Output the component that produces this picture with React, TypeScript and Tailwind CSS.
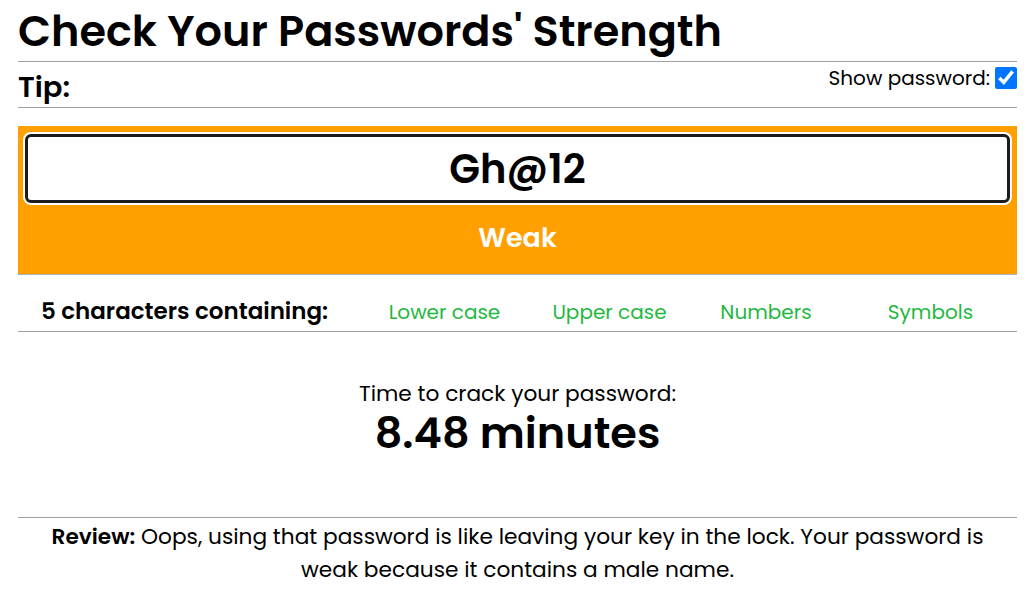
import { useEffect, useRef } from "react";

const checks = [
  { label: "Lower case" },
  { label: "Upper case" },
  { label: "Numbers" },
  { label: "Symbols" },
];

export default function App() {
  const inputRef = useRef<HTMLInputElement>(null);

  useEffect(() => {
    const el = inputRef.current;
    if (el) {
      el.focus();
      el.setSelectionRange(5, 5);
    }
  }, []);

  return (
    <div className="min-h-[601px] bg-white px-[18px] text-black font-['Poppins','Open_Sans',sans-serif]">
      <h1 className="h-[62px] pt-[5px] text-[43px] font-semibold leading-[52px] border-b border-[#a0a0a0]">
        Check Your Passwords' Strength
      </h1>

      {/* tip + show password */}
      <div className="flex h-[46px] justify-between border-b border-[#a0a0a0]">
        <h2 className="pt-[6px] text-[29px] font-semibold leading-[38px]">Tip:</h2>
        <label className="flex h-[31px] items-center gap-[5px] text-[20px]">
          Show password:
          <input type="checkbox" defaultChecked className="h-[22px] w-[22px] accent-[#0075ff]" />
        </label>
      </div>

      {/* password box */}
      <div className="mt-[18px] flex h-[149px] flex-col items-center border-b border-[#a8b4c4] bg-[#ffa000] px-[7px] pt-[8px]">
        <input
          ref={inputRef}
          type="text"
          defaultValue="Gh@12"
          className="h-[69px] w-full rounded-[6px] border-[3px] border-[#1c1c1c] bg-white text-center text-[40px] font-semibold text-black caret-black shadow-[0_0_0_2px_#ffffff] outline-none font-['Poppins','Open_Sans',sans-serif]"
        />
        <div className="mt-[17px] text-[27px] font-semibold leading-[36px] text-white">Weak</div>
      </div>

      {/* character classes */}
      <div className="mt-[20px] grid h-[37px] grid-cols-[333px_187px_143px_170px_159px] items-start border-b border-[#a0a0a0]">
        <div className="text-center text-[23px] font-semibold leading-[32px]">5 characters containing:</div>
        {checks.map((c) => (
          <div key={c.label} className="text-center text-[20px] leading-[34px] text-[#1fb83f]">
            {c.label}
          </div>
        ))}
      </div>

      {/* crack time */}
      <div className="flex h-[185px] flex-col items-center pt-[47px]">
        <div className="text-[21.7px] leading-[30px]">Time to crack your password:</div>
        <div className="text-[43px] font-semibold leading-[48px]">8.48 minutes</div>
      </div>

      <div className="border-t border-[#a0a0a0] pt-[2px]">
        <p className="mx-auto max-w-[960px] text-center text-[21.7px] leading-[33px]">
          <span className="font-semibold">Review:</span> Oops, using that password is like leaving your key in the lock. Your password is weak because it contains a male name.
        </p>
      </div>
    </div>
  );
}
